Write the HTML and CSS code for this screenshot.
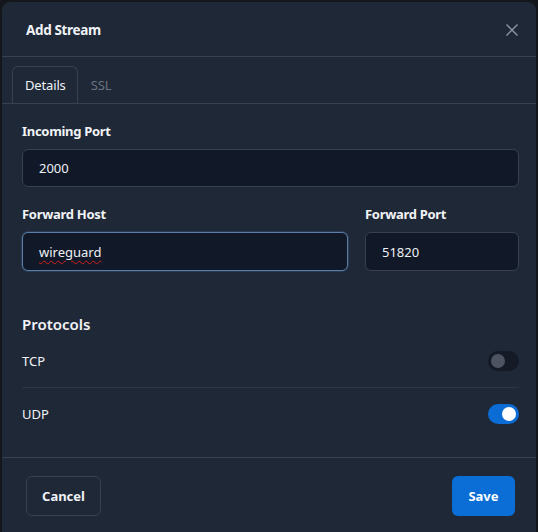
FILE: index.html
```html
<!DOCTYPE html>
<html lang="en">
<head>
<meta charset="utf-8">
<title>Add Stream</title>
<link rel="stylesheet" href="styles.css">
</head>
<body>
<div class="modal">
  <div class="modal-header">
    <div class="modal-title">Add Stream</div>
    <button class="close" aria-label="Close">
      <svg width="12" height="12" viewBox="0 0 12 12"><path d="M0.5 0.5 L11.5 11.5 M11.5 0.5 L0.5 11.5" stroke="#8b939f" stroke-width="1.4" fill="none"/></svg>
    </button>
  </div>
  <div class="tabs">
    <div class="tab active">Details</div>
    <div class="tab">SSL</div>
  </div>
  <div class="modal-body">
    <div class="field">
      <label class="label">Incoming Port</label>
      <div class="input">2000</div>
    </div>
    <div class="row">
      <div class="field grow">
        <label class="label">Forward Host</label>
        <div class="input focused"><span class="spell">wireguard</span></div>
      </div>
      <div class="field port">
        <label class="label">Forward Port</label>
        <div class="input">51820</div>
      </div>
    </div>
    <div class="section-title">Protocols</div>
    <div class="switch-row">
      <span>TCP</span>
      <span class="switch"><span class="knob"></span></span>
    </div>
    <div class="switch-row">
      <span>UDP</span>
      <span class="switch on"><span class="knob"></span></span>
    </div>
  </div>
  <div class="modal-footer">
    <button class="btn btn-cancel">Cancel</button>
    <button class="btn btn-save">Save</button>
  </div>
</div>
</body>
</html>
```
FILE: styles.css
```css
* { box-sizing: border-box; }
html, body { margin: 0; padding: 0; }
body {
  background: #13161b;
  font-family: "Noto Sans", "Open Sans", sans-serif;
  color: #f1f3f6;
  height: 532px;
  overflow: hidden;
}
.modal {
  margin: 2px 2px 0 2px;
  height: 530px;
  background: #1f2837;
  border-radius: 8px 8px 0 0;
}
.modal-header {
  height: 55px;
  display: flex;
  align-items: center;
  justify-content: space-between;
  padding: 1px 18px 0 24px;
  border-bottom: 1px solid #364152;
}
.modal-title {
  font-size: 13.5px;
  font-weight: 700;
  letter-spacing: -0.35px;
}
.close {
  background: none;
  border: 0;
  padding: 0;
  width: 12px;
  height: 12px;
  display: flex;
}
.tabs {
  display: flex;
  padding: 9px 10px 0;
  border-bottom: 1px solid #364152;
}
.tab {
  height: 37px;
  line-height: 36px;
  padding: 0 11px 0 12px;
  font-size: 13px;
  color: #6b7380;
  border: 1px solid transparent;
  border-bottom: 0;
  border-radius: 6px 6px 0 0;
  letter-spacing: -0.15px;
}
.tab.active {
  color: #eef1f5;
  border-color: #364152;
  margin-bottom: -1px;
  background: #1f2837;
}
.modal-body {
  padding: 17px 17px 17px 20px;
  border-bottom: 1px solid #364152;
}
.field { display: flex; flex-direction: column; }
.label {
  font-size: 13px;
  font-weight: 700;
  line-height: 20px;
  margin-bottom: 8px;
  letter-spacing: -0.3px;
}
.input {
  height: 38px;
  background: #111827;
  border: 1px solid #364152;
  border-radius: 6px;
  padding: 0 16px;
  display: flex;
  align-items: center;
  font-size: 13px;
  color: #eef1f5;
}
.input.focused {
  border-color: #5b7ea6;
  box-shadow: 0 0 0 1px rgba(70,110,160,0.25);
}
.spell {
  text-decoration: underline wavy #d02020;
  text-decoration-thickness: 1px;
  text-underline-offset: 3px;
}
.row {
  display: flex;
  gap: 17px;
  margin-top: 17px;
}
.row .input { height: 39px; }
.grow { flex: 1; }
.port { width: 154px; }
.section-title {
  margin-top: 43px;
  font-size: 15px;
  font-weight: 600;
  line-height: 21px;
}
.switch-row {
  height: 52px;
  display: flex;
  align-items: center;
  justify-content: space-between;
  font-size: 13px;
}
.switch-row + .switch-row {
  border-top: 1px solid #2b3646;
  height: 53px;
}
.switch {
  width: 31px;
  height: 20px;
  border-radius: 10px;
  background: #141a26;
  display: flex;
  align-items: center;
  padding: 0 3px;
}
.knob {
  width: 14px;
  height: 14px;
  border-radius: 50%;
  background: #4d5361;
}
.switch.on {
  background: #0b6cd5;
  justify-content: flex-end;
}
.switch.on .knob {
  background: #ffffff;
}
.modal-footer {
  display: flex;
  justify-content: space-between;
  padding: 18px 21px 0 24px;
}
.btn {
  height: 40px;
  border-radius: 6px;
  font-family: inherit;
  font-size: 13px;
  font-weight: 700;
  color: #eef1f5;
  cursor: pointer;
}
.btn-cancel {
  width: 75px;
  background: transparent;
  border: 1px solid #364152;
}
.btn-save {
  width: 63px;
  background: #0a6ed6;
  border: 0;
  color: #ffffff;
}
```
